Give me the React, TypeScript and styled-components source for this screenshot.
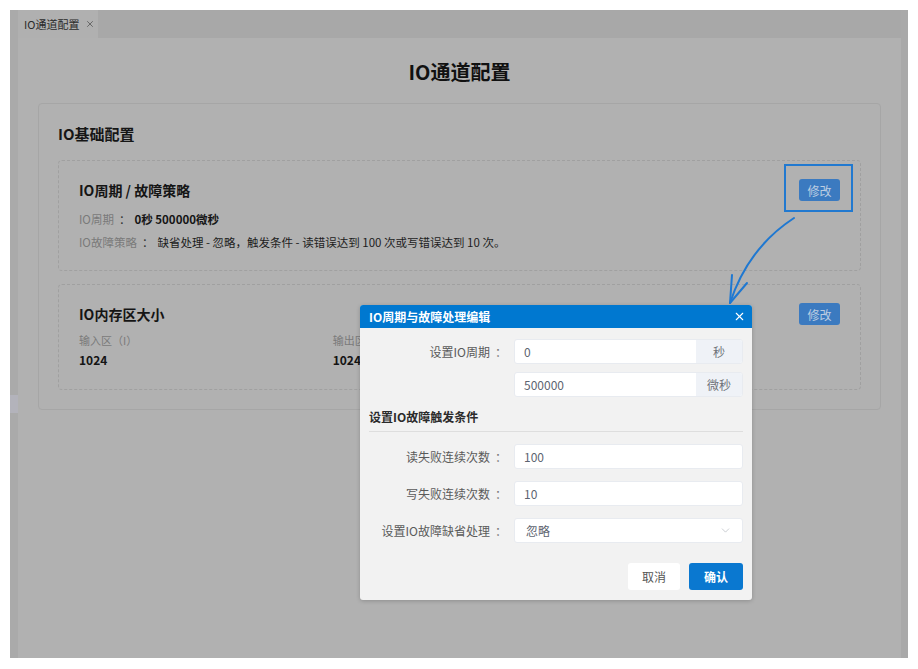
import * as React from 'react';
import styled, { createGlobalStyle } from 'styled-components';
import { X, ChevronDown } from 'lucide-react';

const FONT = `"Noto Sans CJK SC", "Noto Sans", sans-serif`;

const GlobalStyle = createGlobalStyle`
  html, body {
    margin: 0;
    padding: 0;
    background: #ffffff;
    font-family: ${FONT};
  }
  * {
    box-sizing: border-box;
  }
`;

const Stage = styled.div`
  position: relative;
  width: 918px;
  height: 669px;
  padding: 10px;
  overflow: hidden;
`;

const Frame = styled.div`
  display: flex;
  width: 898px;
  height: 648px;
  background: #aaaaaa;
`;

const LeftRail = styled.div`
  width: 8px;
  display: flex;
  flex-direction: column;
`;

const RailThumb = styled.div`
  margin-top: 385px;
  height: 18px;
  background: #b3b3bb;
`;

const Main = styled.div`
  flex: 1;
  display: flex;
  flex-direction: column;
  background: #b1b1b1;
`;

const RightRail = styled.div`
  width: 7px;
  background: #a9a9a9;
`;

const TabBar = styled.div`
  height: 28px;
  display: flex;
  background: #a8a8a8;
`;

const Tab = styled.div`
  display: flex;
  align-items: center;
  gap: 6px;
  padding: 0 3px 0 6px;
  background: #b0b0b0;
  font-size: 11px;
  color: #2a2a2a;
  white-space: nowrap;
`;

const Content = styled.div`
  flex: 1;
  padding: 0 20px;
`;

const PageTitle = styled.h1`
  margin: 0;
  padding: 22px 0 19px;
  line-height: 24px;
  text-align: center;
  font-size: 20px;
  font-weight: 700;
  color: #111;
`;

const OuterCard = styled.section`
  border: 1px solid #a6a6a6;
  border-radius: 4px;
  padding: 20px 19px 19px;
`;

const CardHeading = styled.h2`
  margin: 0 0 16px;
  line-height: 20px;
  font-size: 15px;
  font-weight: 600;
  color: #161616;
`;

const InnerCard = styled.div<{ $top?: number; $bottom?: number }>`
  border: 1px dashed #a0a0a0;
  border-radius: 4px;
  padding: 18px 20px ${({ $bottom }) => $bottom ?? 16}px;
  margin-top: ${({ $top }) => $top ?? 0}px;
`;

const InnerHeader = styled.div`
  display: flex;
  align-items: center;
  justify-content: space-between;
  height: 22px;
`;

const InnerTitle = styled.h3`
  margin: 0;
  font-size: 14px;
  font-weight: 600;
  color: #151515;
`;

const EditButton = styled.button`
  width: 41px;
  height: 22px;
  border: none;
  border-radius: 3px;
  background: #3b7ac0;
  color: #bccde2;
  font-family: ${FONT};
  font-size: 12px;
  padding: 0;
`;

const InfoList = styled.ul`
  list-style: none;
  margin: 7px 0 0;
  padding: 0;
  line-height: 23px;
  font-size: 11.5px;

  span.label {
    color: #7a7a7a;
  }
  span.colon {
    color: #333;
    margin: 0 4px 0 5px;
  }
  span.strong {
    color: #151515;
    font-weight: 600;
  }
  span.value {
    color: #1d1d1d;
  }
`;

const MemGrid = styled.div`
  display: grid;
  grid-template-columns: repeat(3, 1fr);
  margin-top: 6px;
`;

const MemLabel = styled.div`
  font-size: 11px;
  line-height: 19px;
  color: #7a7a7a;
`;

const MemValue = styled.div`
  font-size: 12px;
  line-height: 19px;
  font-weight: 700;
  color: #141414;
`;

const Highlight = styled.div`
  position: absolute;
  left: 784px;
  top: 164px;
  width: 69px;
  height: 48px;
  border: 2px solid #2179d0;
`;

const ArrowSvg = styled.svg`
  position: absolute;
  left: 715px;
  top: 205px;
`;

const Modal = styled.div`
  position: absolute;
  left: 360px;
  top: 305px;
  width: 392px;
  height: 295px;
  border-radius: 3px;
  background: #f2f2f2;
  box-shadow: 0 1px 4px rgba(0, 0, 0, 0.2);
  overflow: hidden;
  display: flex;
  flex-direction: column;
`;

const ModalHeader = styled.div`
  height: 23px;
  display: flex;
  align-items: center;
  justify-content: space-between;
  padding: 0 6px 0 9px;
  background: #0078d0;
  color: #fff;
`;

const ModalTitle = styled.span`
  font-size: 12px;
  font-weight: 600;
`;

const ModalBody = styled.div`
  flex: 1;
  padding: 11px 9px 10px;
  display: flex;
  flex-direction: column;
`;

const FormRow = styled.div<{ $gap: number }>`
  display: flex;
  align-items: center;
  margin-top: ${({ $gap }) => $gap}px;
`;

const FieldLabel = styled.label`
  width: 138px;
  margin-right: 7px;
  text-align: right;
  font-size: 12px;
  color: #5a5a5a;
  white-space: nowrap;

  span {
    margin-left: 5px;
    color: #777;
  }
`;

const InputGroup = styled.div`
  flex: 1;
  height: 25px;
  display: flex;
  background: #fff;
  border: 1px solid #e8ebf0;
  border-radius: 3px;
  overflow: hidden;
`;

const Field = styled.input`
  flex: 1;
  min-width: 0;
  border: none;
  outline: none;
  padding: 0 9px;
  font-family: ${FONT};
  font-size: 12px;
  color: #5d6470;
  background: transparent;
`;

const Addon = styled.span`
  width: 46px;
  display: flex;
  align-items: center;
  justify-content: center;
  background: #eff2f7;
  font-size: 12px;
  color: #6f737a;
`;

const SelectBox = styled.div`
  flex: 1;
  height: 25px;
  display: flex;
  align-items: center;
  justify-content: space-between;
  padding: 0 10px 0 11px;
  background: #fff;
  border: 1px solid #e8ebf0;
  border-radius: 3px;
  font-size: 12px;
  color: #5d6470;
`;

const SectionTitle = styled.div`
  margin-top: 9px;
  padding: 3px 0 6px;
  border-bottom: 1px solid #dedede;
  font-size: 12px;
  font-weight: 600;
  color: #2b2b2b;
  line-height: 16px;
`;

const Footer = styled.div`
  margin-top: auto;
  display: flex;
  justify-content: flex-end;
  gap: 9px;
`;

const FooterButton = styled.button<{ $primary?: boolean; $w: number }>`
  width: ${({ $w }) => $w}px;
  height: 27px;
  border: none;
  border-radius: 3px;
  padding: 0;
  font-family: ${FONT};
  font-size: 12px;
  font-weight: ${({ $primary }) => ($primary ? 600 : 400)};
  background: ${({ $primary }) => ($primary ? '#0a78d0' : '#ffffff')};
  color: ${({ $primary }) => ($primary ? '#ffffff' : '#555')};
`;

function InfoCard() {
  return (
    <InnerCard>
      <InnerHeader>
        <InnerTitle>IO周期 / 故障策略</InnerTitle>
        <EditButton>修改</EditButton>
      </InnerHeader>
      <InfoList>
        <li>
          <span className="label">IO周期</span>
          <span className="colon">：</span>
          <span className="strong">0秒 500000微秒</span>
        </li>
        <li>
          <span className="label">IO故障策略</span>
          <span className="colon">：</span>
          <span className="value">
            缺省处理 - 忽略，触发条件 - 读错误达到 100 次或写错误达到 10 次。
          </span>
        </li>
      </InfoList>
    </InnerCard>
  );
}

const memAreas = [
  { label: '输入区（I）', value: 1024 },
  { label: '输出区（Q）', value: 1024 },
  { label: '位存储区（M）', value: 1024 },
];

function MemoryCard() {
  return (
    <InnerCard $top={13} $bottom={20}>
      <InnerHeader>
        <InnerTitle>IO内存区大小</InnerTitle>
        <EditButton>修改</EditButton>
      </InnerHeader>
      <MemGrid>
        {memAreas.map((m) => (
          <div key={m.label}>
            <MemLabel>{m.label}</MemLabel>
            <MemValue>{m.value}</MemValue>
          </div>
        ))}
      </MemGrid>
    </InnerCard>
  );
}

function FormLabel(props: { text?: string }) {
  return (
    <FieldLabel>
      {props.text && (
        <>
          {props.text}
          <span>：</span>
        </>
      )}
    </FieldLabel>
  );
}

function EditDialog() {
  return (
    <Modal>
      <ModalHeader>
        <ModalTitle>IO周期与故障处理编辑</ModalTitle>
        <X size={13} strokeWidth={2} color="#fff" />
      </ModalHeader>
      <ModalBody>
        <FormRow $gap={0}>
          <FormLabel text="设置IO周期" />
          <InputGroup>
            <Field readOnly defaultValue="0" />
            <Addon>秒</Addon>
          </InputGroup>
        </FormRow>
        <FormRow $gap={8}>
          <FormLabel />
          <InputGroup>
            <Field readOnly defaultValue="500000" />
            <Addon>微秒</Addon>
          </InputGroup>
        </FormRow>
        <SectionTitle>设置IO故障触发条件</SectionTitle>
        <FormRow $gap={12}>
          <FormLabel text="读失败连续次数" />
          <InputGroup>
            <Field readOnly defaultValue="100" />
          </InputGroup>
        </FormRow>
        <FormRow $gap={12}>
          <FormLabel text="写失败连续次数" />
          <InputGroup>
            <Field readOnly defaultValue="10" />
          </InputGroup>
        </FormRow>
        <FormRow $gap={12}>
          <FormLabel text="设置IO故障缺省处理" />
          <SelectBox>
            <span>忽略</span>
            <ChevronDown size={13} strokeWidth={1.3} color="#b5b9c0" />
          </SelectBox>
        </FormRow>
        <Footer>
          <FooterButton $w={52}>取消</FooterButton>
          <FooterButton $w={54} $primary>
            确认
          </FooterButton>
        </Footer>
      </ModalBody>
    </Modal>
  );
}

export default function App() {
  return (
    <>
      <GlobalStyle />
      <Stage>
        <Frame>
          <LeftRail>
            <RailThumb />
          </LeftRail>
          <Main>
            <TabBar>
              <Tab>
                IO通道配置
                <X size={10} strokeWidth={1.6} color="#444" />
              </Tab>
            </TabBar>
            <Content>
              <PageTitle>IO通道配置</PageTitle>
              <OuterCard>
                <CardHeading>IO基础配置</CardHeading>
                <InfoCard />
                <MemoryCard />
              </OuterCard>
            </Content>
          </Main>
          <RightRail />
        </Frame>
        <Highlight />
        <ArrowSvg width="100" height="105" viewBox="0 0 100 105" fill="none">
          <path
            d="M79 13 Q33 43 15 98"
            stroke="#1f78d1"
            strokeWidth="2"
            strokeLinecap="round"
          />
          <path
            d="M17 70 L15 98 L32 78"
            stroke="#1f78d1"
            strokeWidth="2"
            strokeLinecap="round"
            strokeLinejoin="round"
          />
        </ArrowSvg>
        <EditDialog />
      </Stage>
    </>
  );
}
